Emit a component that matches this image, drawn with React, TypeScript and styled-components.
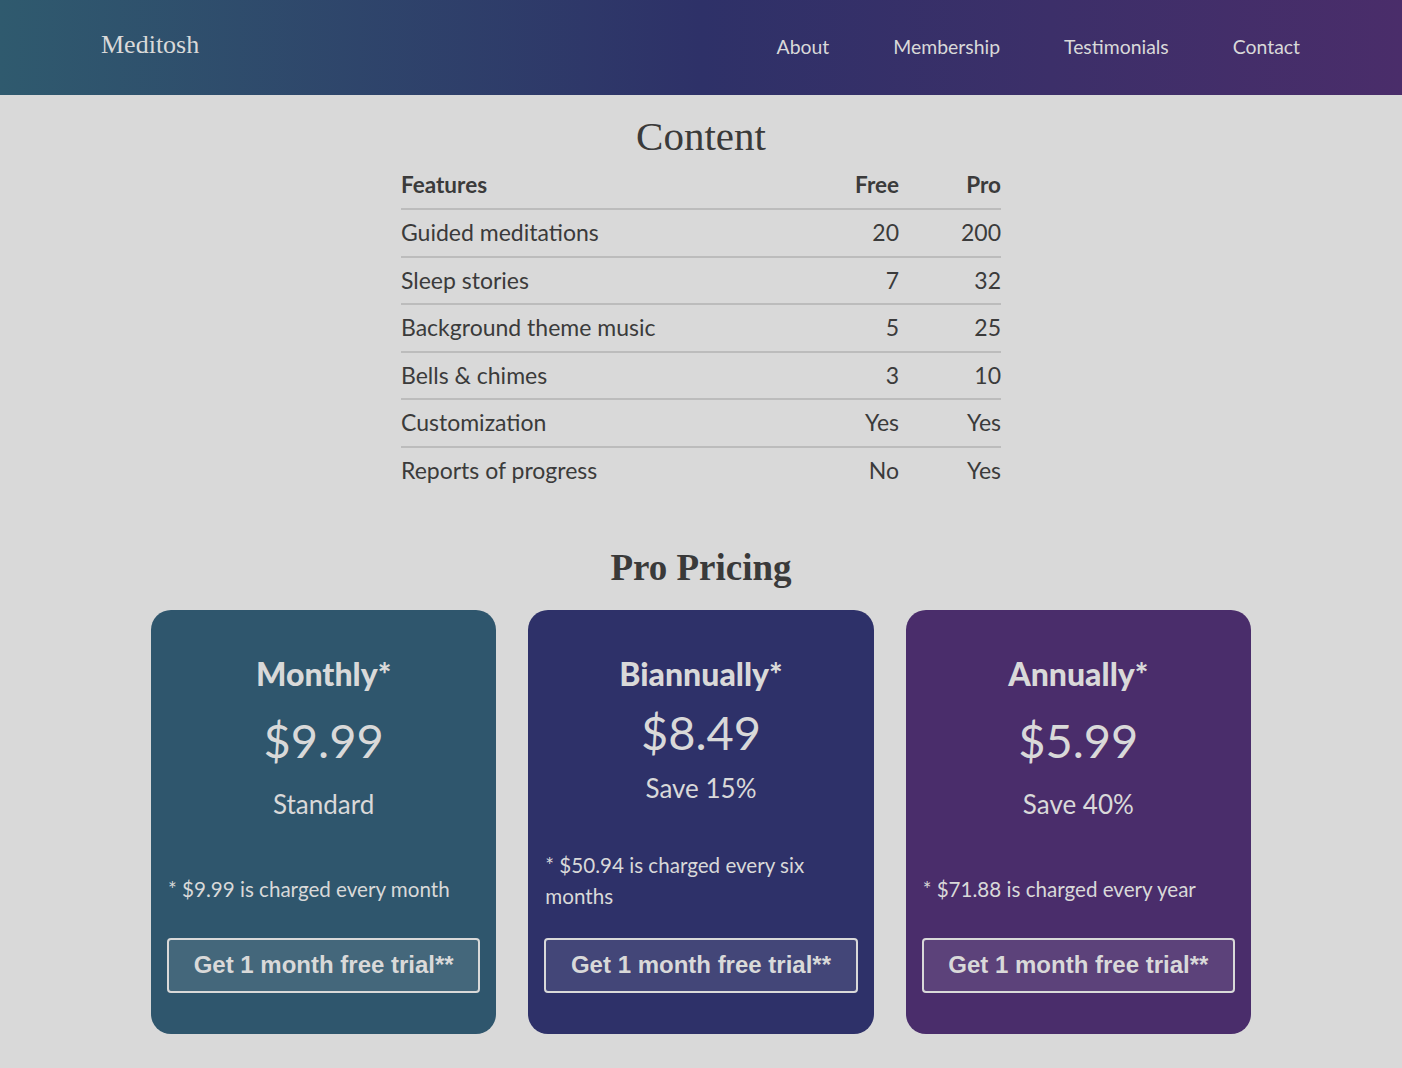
import React from 'react';
import styled, { createGlobalStyle } from 'styled-components';

const GlobalStyle = createGlobalStyle`
  html, body {
    margin: 0;
    padding: 0;
    background: #d9d9d9;
  }
  body {
    font-family: Lato, "Open Sans", sans-serif;
    color: #3b3b3b;
  }
`;

const Header = styled.header`
  height: 95px;
  display: flex;
  align-items: center;
  justify-content: space-between;
  padding: 0 101px;
  box-sizing: border-box;
  background: linear-gradient(90deg, #2f5a6e 0%, #2e3168 50%, #4a2d6a 100%);
  color: #d9d9d9;
`;

const Logo = styled.a`
  font-family: "Liberation Serif", "DejaVu Serif", serif;
  font-size: 26px;
  color: #d9d9d9;
  text-decoration: none;
  margin-top: -5px;
`;

const Nav = styled.nav`
  display: flex;
  gap: 64px;
  margin-top: -2px;
  margin-right: 1px;
`;

const NavLink = styled.a`
  font-size: 19.4px;
  color: #d9d9d9;
  text-decoration: none;
`;

const Main = styled.main`
  display: flex;
  flex-direction: column;
  align-items: center;
  padding-bottom: 34px;
`;

const Heading = styled.h2<{ $bold?: boolean }>`
  font-family: "Liberation Serif", "DejaVu Serif", serif;
  font-size: ${(p) => (p.$bold ? '37px' : '41px')};
  font-weight: ${(p) => (p.$bold ? 700 : 400)};
  line-height: 44px;
  margin: 0;
  text-align: center;
  color: #3a3a3a;
`;

const ContentSection = styled.section`
  padding-top: 19px;
`;

const Table = styled.table`
  width: 600px;
  border-collapse: collapse;
  margin-top: 4px;
`;

const Th = styled.th<{ $w?: number }>`
  font-size: 22.5px;
  font-weight: 700;
  text-align: ${(p) => (p.$w ? 'right' : 'left')};
  width: ${(p) => (p.$w ? `${p.$w}px` : 'auto')};
  padding: 7px 0 7px;
  line-height: 32px;
  border-bottom: 2px solid #bcbcbc;
`;

const Tr = styled.tr`
  &:not(:last-child) td {
    border-bottom: 2px solid #bcbcbc;
  }
`;

const Td = styled.td<{ $num?: boolean }>`
  font-size: 23px;
  text-align: ${(p) => (p.$num ? 'right' : 'left')};
  padding: 7px 0 7px;
  line-height: 31.6px;
`;

const PricingSection = styled.section`
  margin-top: 52px;
  display: flex;
  flex-direction: column;
  align-items: center;
`;

const Cards = styled.div`
  display: grid;
  width: 1100px;
  grid-template-columns: repeat(3, 1fr);
  gap: 32px;
  margin-top: 20px;
`;

const Card = styled.div<{ $bg: string }>`
  height: 424px;
  box-sizing: border-box;
  padding: 47px 16px 41px;
  border-radius: 20px;
  background: ${(p) => p.$bg};
  color: #d9d9d9;
  display: flex;
  flex-direction: column;
  justify-content: space-between;
  text-align: center;
`;

const PlanTitle = styled.h3`
  font-size: 32px;
  font-weight: 900;
  line-height: 34px;
  margin: 0;
`;

const Price = styled.div`
  font-size: 47px;
  line-height: 58px;
`;

const Subtitle = styled.div`
  font-size: 26px;
  line-height: 31px;
  margin-bottom: 17px;
`;

const Footnote = styled.p`
  font-size: 20.6px;
  line-height: 31px;
  margin: 17px 0 13px;
  padding-left: 1px;
  text-align: left;
`;

const TrialButton = styled.button`
  height: 55px;
  width: 100%;
  border: 2px solid #d9d9d9;
  border-radius: 4px;
  background: rgba(255, 255, 255, 0.1);
  color: #d9d9d9;
  font-family: "Liberation Sans", Arial, sans-serif;
  font-size: 24px;
  font-weight: 700;
  cursor: pointer;
`;

const rows = [
  ['Guided meditations', '20', '200'],
  ['Sleep stories', '7', '32'],
  ['Background theme music', '5', '25'],
  ['Bells & chimes', '3', '10'],
  ['Customization', 'Yes', 'Yes'],
  ['Reports of progress', 'No', 'Yes'],
];

const plans = [
  { title: 'Monthly*', price: '$9.99', sub: 'Standard', note: '* $9.99 is charged every month', bg: '#2f566d' },
  { title: 'Biannually*', price: '$8.49', sub: 'Save 15%', note: '* $50.94 is charged every six months', bg: '#2e3169' },
  { title: 'Annually*', price: '$5.99', sub: 'Save 40%', note: '* $71.88 is charged every year', bg: '#4a2d6b' },
];

export default function App() {
  return (
    <>
      <GlobalStyle />
      <Header>
        <Logo href="#">Meditosh</Logo>
        <Nav>
          <NavLink href="#">About</NavLink>
          <NavLink href="#">Membership</NavLink>
          <NavLink href="#">Testimonials</NavLink>
          <NavLink href="#">Contact</NavLink>
        </Nav>
      </Header>
      <Main>
        <ContentSection>
          <Heading>Content</Heading>
          <Table>
            <thead>
              <tr>
                <Th>Features</Th>
                <Th $w={100}>Free</Th>
                <Th $w={102}>Pro</Th>
              </tr>
            </thead>
            <tbody>
              {rows.map(([name, free, pro]) => (
                <Tr key={name}>
                  <Td>{name}</Td>
                  <Td $num>{free}</Td>
                  <Td $num>{pro}</Td>
                </Tr>
              ))}
            </tbody>
          </Table>
        </ContentSection>
        <PricingSection>
          <Heading $bold>Pro Pricing</Heading>
          <Cards>
            {plans.map((p) => (
              <Card key={p.title} $bg={p.bg}>
                <PlanTitle>{p.title}</PlanTitle>
                <Price>{p.price}</Price>
                <Subtitle>{p.sub}</Subtitle>
                <Footnote>{p.note}</Footnote>
                <TrialButton>Get 1 month free trial**</TrialButton>
              </Card>
            ))}
          </Cards>
        </PricingSection>
      </Main>
    </>
  );
}
